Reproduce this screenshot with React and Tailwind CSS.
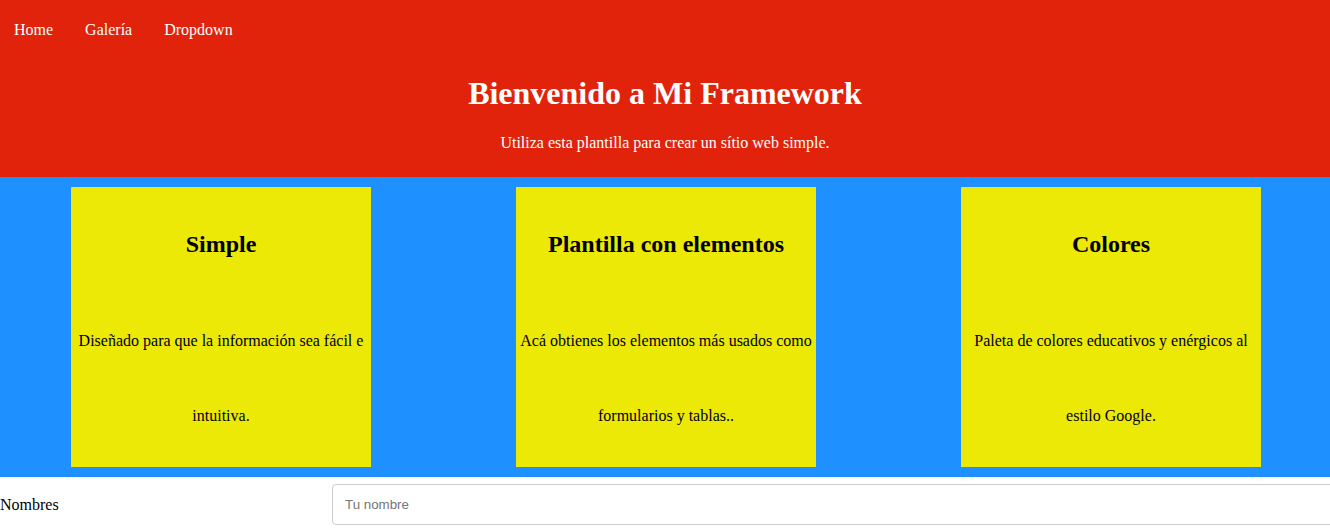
export default function App() {
  const cards = [
    { t: "Simple", p: "Diseñado para que la información sea fácil e intuitiva." },
    { t: "Plantilla con elementos", p: "Acá obtienes los elementos más usados como formularios y tablas.." },
    { t: "Colores", p: "Paleta de colores educativos y enérgicos al estilo Google." },
  ];
  return (
    <div className="w-[1330px] h-[530px] overflow-hidden bg-white text-black" style={{ fontFamily: '"Liberation Serif", "Times New Roman", serif' }}>
      <header className="bg-[#e0230a] text-white h-[177px]">
        <nav className="h-[60px] flex items-center pl-[14px] gap-[32px] text-[16px]">
          <a>Home</a>
          <a>Galería</a>
          <a>Dropdown</a>
        </nav>
        <h1 className="mt-[15px] text-center text-[32px] font-bold leading-[36px]">Bienvenido a Mi Framework</h1>
        <p className="mt-[23px] text-center text-[16px] leading-[18px]">Utiliza esta plantilla para crear un sítio web simple.</p>
      </header>
      <section className="bg-[#1e90ff] py-[10px] pl-[71px] flex gap-[145px]">
        {cards.map((c) => (
          <div key={c.t} className="w-[300px] h-[280px] shrink-0 bg-[#ece906] text-center pt-[43px]">
            <h2 className="text-[24px] font-bold leading-[28px]">{c.t}</h2>
            <p className="mt-[45px] text-[16px] leading-[75px]">{c.p}</p>
          </div>
        ))}
      </section>
      <div className="flex items-center py-[7px]">
        <label className="w-[332px] shrink-0 text-[16px]">Nombres</label>
        <input
          placeholder="Tu nombre"
          className="w-[1010px] shrink-0 h-[41px] border border-[#cccccc] rounded-[4px] pl-[12px] text-[13.333px] placeholder:text-[#757575] outline-none"
          style={{ fontFamily: '"Liberation Sans", Arial, sans-serif' }}
        />
      </div>
    </div>
  );
}
